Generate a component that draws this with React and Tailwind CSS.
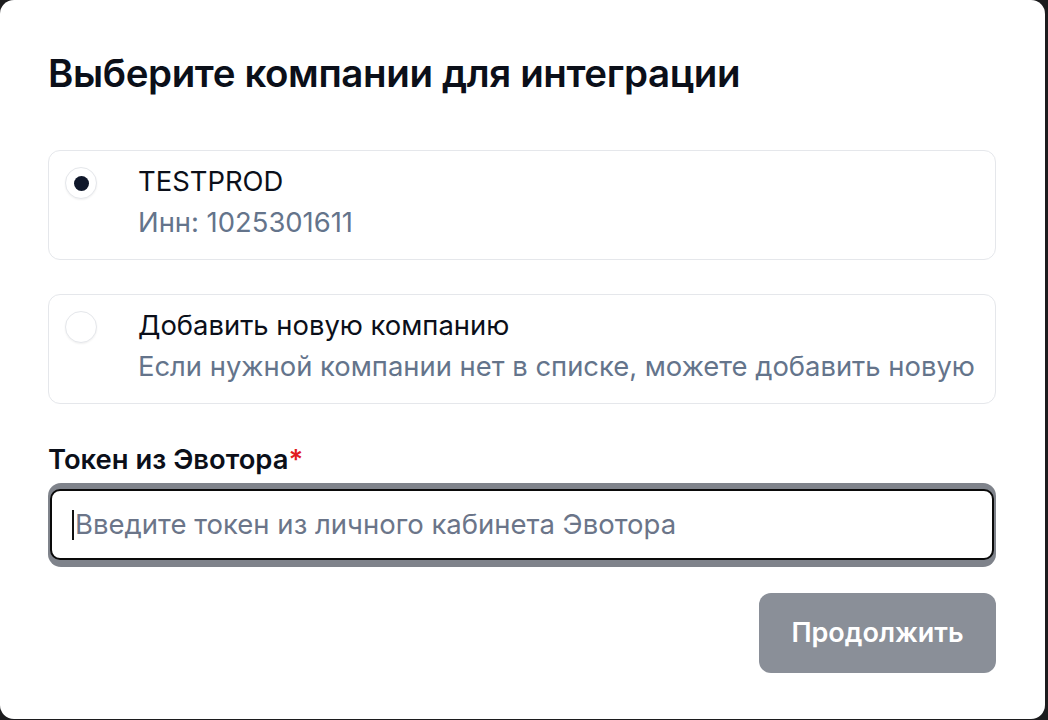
import React from 'react';

const companies = [
    { id: 'testprod', title: 'TESTPROD', subtitle: 'Инн: 1025301611' },
    { id: 'new', title: 'Добавить новую компанию', subtitle: 'Если нужной компании нет в списке, можете добавить новую' },
];

const Radio = ({ checked }) => (
    <span className="mt-[6px] w-8 h-8 shrink-0 rounded-full border border-[#e5e7eb] bg-white shadow-[0_1px_2px_rgba(0,0,0,0.06)] flex items-center justify-center">
        {checked && <span className="w-[15px] h-[15px] rounded-full bg-[#0f172a]" />}
    </span>
);

const App = () => {
    const selected = 'testprod';

    return (
        <div className="w-[1048px] h-[720px] bg-[#1c1c1e] font-['Inter','Noto_Sans',sans-serif]">
            <div className="w-[1045px] h-[719px] bg-white rounded-[14px] pl-12 pr-[49px] pt-[50px] flex flex-col">
                <h1 className="text-[38.5px] leading-[46px] font-semibold text-[#0b0f19] tracking-[-0.01em]">
                    Выберите компании для интеграции
                </h1>

                <div className="mt-[54px] flex flex-col gap-[34px]">
                    {companies.map((c) => (
                        <label
                            key={c.id}
                            className="border border-[#e5e7eb] rounded-[12px] pl-4 pt-[10px] pb-[16px] flex items-start gap-[41px]"
                        >
                            <Radio checked={selected === c.id} />
                            <div className="flex flex-col text-[27.4px]">
                                <span className="leading-[40px] text-[#0b0f19]">{c.title}</span>
                                <span className="leading-[42px] text-[#64748b]">{c.subtitle}</span>
                            </div>
                        </label>
                    ))}
                </div>

                <div className="mt-[37px] text-[27.4px] leading-[36px] font-semibold text-[#0b0f19]">
                    Токен из Эвотора<span className="text-[#e11d1d]">*</span>
                </div>

                <div className="mt-[6px] bg-[#7f838b] rounded-[13px] pt-[6px] pb-[7px] px-[2px]">
                    <div className="h-[71px] bg-white border-2 border-[#0a0a0a] rounded-[10px] flex items-center pl-[20px]">
                        <span className="w-[2px] h-[30px] bg-[#111] mr-[1px]" />
                        <span className="text-[27.5px] text-[#6b7589]">Введите токен из личного кабинета Эвотора</span>
                    </div>
                </div>

                <div className="mt-[26px] flex justify-end">
                    <button className="w-[237px] h-[80px] rounded-[12px] bg-[#8a8f98] text-white text-[27px] font-semibold">
                        Продолжить
                    </button>
                </div>
            </div>
        </div>
    );
};

export default App;
